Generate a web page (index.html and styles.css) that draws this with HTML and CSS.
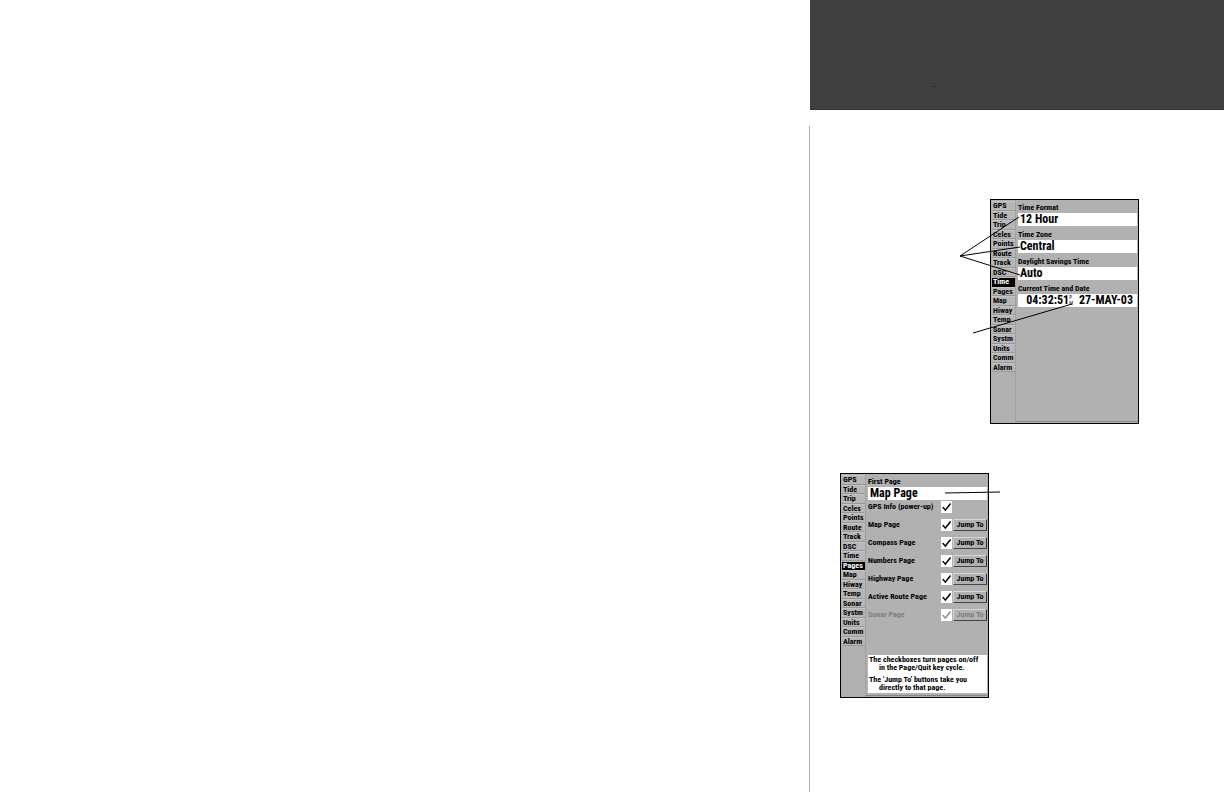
FILE: index.html
```html
<!DOCTYPE html>
<html lang="en">
<head>
    <meta charset="UTF-8">
    <meta name="viewport" content="width=device-width, initial-scale=1.0">
    <title>Time and Pages Tabs</title>
    <link rel="stylesheet" href="styles.css">
</head>
<body>
    <main class="sheet">
        <aside class="sidebar">
            <header class="banner"><span class="dot"></span></header>
            <div class="figures">
                <section class="screen screen-time">
                    <nav class="tabs">
                        <button type="button">GPS</button>
                        <button type="button">Tide</button>
                        <button type="button">Trip</button>
                        <button type="button">Celes</button>
                        <button type="button">Points</button>
                        <button type="button">Route</button>
                        <button type="button">Track</button>
                        <button type="button">DSC</button>
                        <button type="button" class="active">Time</button>
                        <button type="button">Pages</button>
                        <button type="button">Map</button>
                        <button type="button">Hiway</button>
                        <button type="button">Temp</button>
                        <button type="button">Sonar</button>
                        <button type="button">Systm</button>
                        <button type="button">Units</button>
                        <button type="button">Comm</button>
                        <button type="button">Alarm</button>
                    </nav>
                    <form class="panel">
                        <label for="format">Time Format</label>
                        <select id="format" class="field"><option>12 Hour</option></select>
                        <label for="zone">Time Zone</label>
                        <select id="zone" class="field"><option>Central</option></select>
                        <label for="daylight">Daylight Savings Time</label>
                        <select id="daylight" class="field"><option>Auto</option></select>
                        <label for="clock">Current Time and Date</label>
                        <output id="clock" class="field clock"><span>04:32:51</span><span class="ampm">P<br>M</span><span class="date">27-MAY-03</span></output>
                    </form>
                    <svg class="callout callout-time" width="120" height="140" viewBox="0 0 120 140" aria-hidden="true">
                        <path d="M0 57 L59 18 M0 57 L60 48 M0 57 L60 76 M13 134 L112 105"/>
                    </svg>
                </section>

                <section class="screen screen-pages">
                    <nav class="tabs">
                        <button type="button">GPS</button>
                        <button type="button">Tide</button>
                        <button type="button">Trip</button>
                        <button type="button">Celes</button>
                        <button type="button">Points</button>
                        <button type="button">Route</button>
                        <button type="button">Track</button>
                        <button type="button">DSC</button>
                        <button type="button">Time</button>
                        <button type="button" class="active">Pages</button>
                        <button type="button">Map</button>
                        <button type="button">Hiway</button>
                        <button type="button">Temp</button>
                        <button type="button">Sonar</button>
                        <button type="button">Systm</button>
                        <button type="button">Units</button>
                        <button type="button">Comm</button>
                        <button type="button">Alarm</button>
                    </nav>
                    <form class="panel">
                        <label for="first">First Page</label>
                        <select id="first" class="field"><option>Map Page</option></select>
                        <div class="rows">
                            <div class="row">
                                <label for="p-gps">GPS Info (power-up)</label>
                                <input type="checkbox" id="p-gps" checked>
                            </div>
                            <div class="row">
                                <label for="p-map">Map Page</label>
                                <input type="checkbox" id="p-map" checked>
                                <button type="button">Jump To</button>
                            </div>
                            <div class="row">
                                <label for="p-compass">Compass Page</label>
                                <input type="checkbox" id="p-compass" checked>
                                <button type="button">Jump To</button>
                            </div>
                            <div class="row">
                                <label for="p-numbers">Numbers Page</label>
                                <input type="checkbox" id="p-numbers" checked>
                                <button type="button">Jump To</button>
                            </div>
                            <div class="row">
                                <label for="p-highway">Highway Page</label>
                                <input type="checkbox" id="p-highway" checked>
                                <button type="button">Jump To</button>
                            </div>
                            <div class="row">
                                <label for="p-route">Active Route Page</label>
                                <input type="checkbox" id="p-route" checked>
                                <button type="button">Jump To</button>
                            </div>
                            <div class="row off">
                                <label for="p-sonar">Sonar Page</label>
                                <input type="checkbox" id="p-sonar" checked disabled>
                                <button type="button" disabled>Jump To</button>
                            </div>
                        </div>
                        <div class="note">
                            <p>The checkboxes turn pages on/off<br>in the Page/Quit key cycle.</p>
                            <p>The 'Jump To' buttons take you<br>directly to that page.</p>
                        </div>
                    </form>
                    <svg class="callout callout-pages" width="56" height="4" viewBox="0 0 56 4" aria-hidden="true">
                        <path d="M0 2 L55 1"/>
                    </svg>
                </section>
            </div>
        </aside>
    </main>
</body>
</html>
```

FILE: styles.css
```css
* {
    box-sizing: border-box;
}
body {
    margin: 0;
    background-color: #ffffff;
    color: #000000;
    font-family: "Liberation Sans Narrow", "Roboto Condensed", "Liberation Sans", sans-serif;
    font-size: 8px;
    font-weight: bold;
}
button,
select {
    appearance: none;
    margin: 0;
    padding: 0;
    border: none;
    border-radius: 0;
    color: inherit;
    font: inherit;
}
.sheet {
    display: grid;
    grid-template-columns: 809fr 415fr;
    min-height: 100vh;
}
.sidebar {
    grid-column: 2;
    display: flex;
    flex-direction: column;
    gap: 16px;
}
.banner {
    height: 110px;
    margin-left: 1px;
    padding: 86px 124px 0;
    background-color: #404040;
    border-bottom: 1px solid #363436;
}
.dot {
    display: block;
    width: 1px;
    height: 1px;
    background-color: #000000;
}
.figures {
    flex: 1;
    padding-top: 73px;
    border-left: 1px solid #b0b0b0;
}

/* device screens */
.screen {
    position: relative;
    display: grid;
    grid-template-columns: 25px 1fr;
    width: 149px;
    min-height: 225px;
    border: 1px solid #000000;
    background-color: #b1b1b1;
}
.screen-time {
    margin-left: 180px;
}
.screen-pages {
    margin: 49px 0 0 30px;
}
.tabs {
    display: grid;
    grid-auto-rows: 10px 9px;
    align-content: start;
    padding: 1px 0 0 1px;
    border-right: 1px solid #a0a0a0;
}
.tabs button {
    padding-left: 1px;
    border-top: 1px solid #c4c4c4;
    border-bottom: 1px solid #989898;
    background-color: #b7b7b7;
    line-height: 8px;
    text-align: left;
    white-space: nowrap;
}
.tabs .active {
    border-color: #b7b7b7 #b7b7b7 #000000;
    background-color: #000000;
    color: #ffffff;
}
.panel {
    display: flex;
    flex-direction: column;
    padding: 3px 1px 2px 2px;
    border-bottom: 1px solid #888888;
    margin-bottom: 1px;
}
.panel > label {
    line-height: 10px;
}
.field {
    display: block;
    width: 100%;
    height: 13px;
    margin-bottom: 4px;
    padding-left: 2px;
    background-color: #ffffff;
    font-size: 12px;
    line-height: 13px;
}
.clock {
    display: flex;
    justify-content: flex-end;
    padding-right: 4px;
}
.ampm {
    font-size: 5px;
    font-weight: normal;
    line-height: 6px;
}
.date {
    margin-left: 6px;
}

/* page list */
.screen-pages .field {
    margin-bottom: 1px;
}
.row {
    display: grid;
    grid-template-columns: 1fr 11px 34px;
    column-gap: 1px;
    align-items: start;
    height: 18px;
    line-height: 12px;
}
.row input {
    appearance: none;
    width: 11px;
    height: 12px;
    margin: 0;
    background-color: #ffffff;
}
.row input::before {
    content: "";
    display: block;
    width: 11px;
    height: 12px;
    background-color: #000000;
    clip-path: polygon(10% 54%, 22% 48%, 38% 66%, 82% 16%, 92% 26%, 40% 86%);
}
.row button {
    height: 12px;
    border: 1px solid;
    border-color: #d8d8d8 #333333 #444444 #d0d0d0;
    background-color: #b1b1b1;
    line-height: 10px;
}
.off,
.off button {
    color: #808080;
}
.off input::before {
    background-color: #909090;
}
.note {
    margin-top: auto;
    padding: 1px;
    background-color: #ffffff;
    line-height: 8px;
    white-space: nowrap;
}
.note p {
    margin: 0;
    padding-left: 10px;
    text-indent: -10px;
}
.note p + p {
    margin-top: 4px;
}

/* pointer lines */
.callout {
    position: absolute;
    fill: none;
    stroke: #000000;
    stroke-width: 1;
}
.callout-time {
    top: -1px;
    left: -31px;
}
.callout-pages {
    top: 17px;
    left: 104px;
}
```
